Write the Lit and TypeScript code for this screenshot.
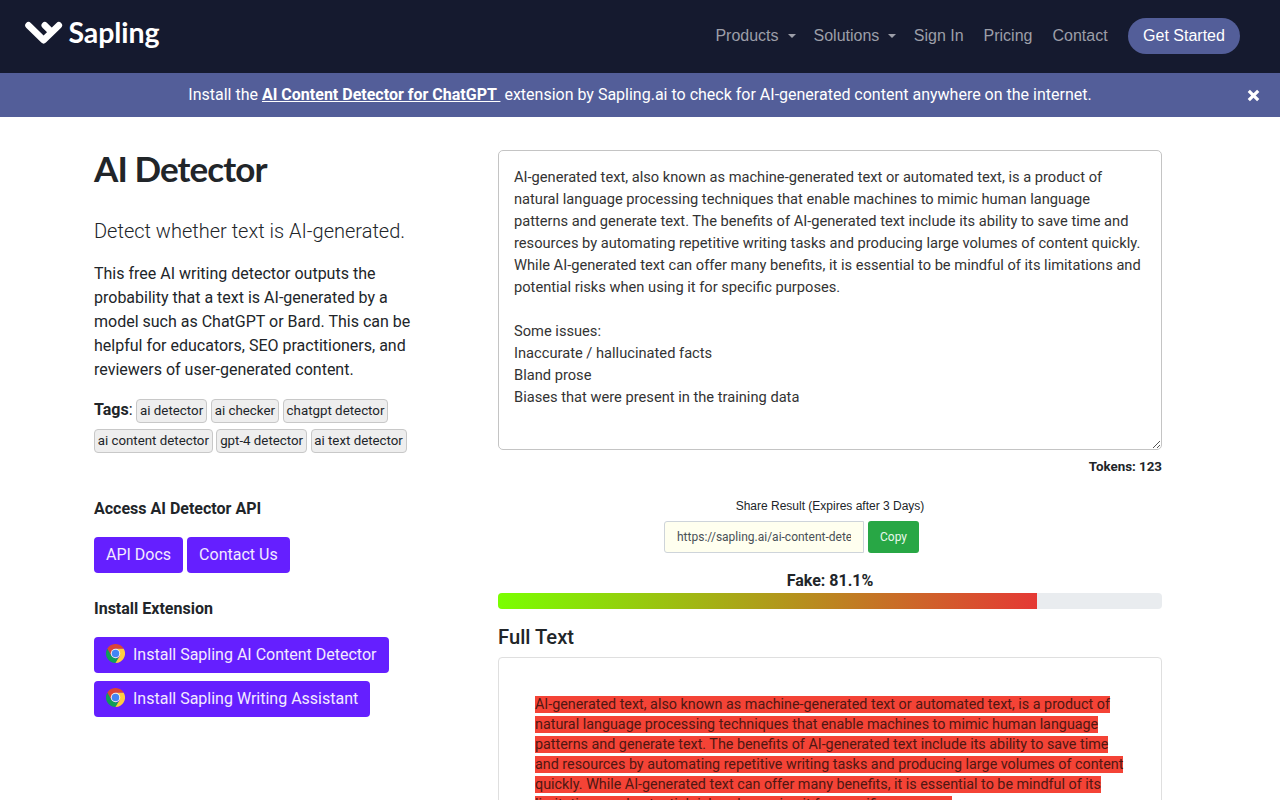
import { LitElement, html, css, svg } from "lit";
import { customElement } from "lit/decorators.js";

const INPUT_LINES = [
  "AI-generated text, also known as machine-generated text or automated text, is a product of",
  "natural language processing techniques that enable machines to mimic human language",
  "patterns and generate text. The benefits of AI-generated text include its ability to save time and",
  "resources by automating repetitive writing tasks and producing large volumes of content quickly.",
  "While AI-generated text can offer many benefits, it is essential to be mindful of its limitations and",
  "potential risks when using it for specific purposes.",
  "",
  "Some issues:",
  "Inaccurate / hallucinated facts",
  "Bland prose",
  "Biases that were present in the training data",
];

const RESULT_LINES = [
  "AI-generated text, also known as machine-generated text or automated text, is a product of",
  "natural language processing techniques that enable machines to mimic human language",
  "patterns and generate text. The benefits of AI-generated text include its ability to save time",
  "and resources by automating repetitive writing tasks and producing large volumes of content",
  "quickly. While AI-generated text can offer many benefits, it is essential to be mindful of its",
  "limitations and potential risks when using it for specific purposes.",
];

const TAG_ROWS = [
  ["ai detector", "ai checker", "chatgpt detector"],
  ["ai content detector", "gpt-4 detector", "ai text detector"],
];

const SCORE = 81.1;

const chromeIcon = svg`<svg class="chrome" viewBox="0 0 48 48" width="19" height="19">
  <path fill="#db4437" d="M3.2 12A24 24 0 0 1 44.8 12H24L13.6 30Z"/>
  <path fill="#0f9d58" d="M3.2 12L13.6 30L24 36H34.4L24 48A24 24 0 0 1 3.2 12Z"/>
  <path fill="#ffcd40" d="M24 12H44.8A24 24 0 0 1 24 48L34.4 30Z"/>
  <circle cx="24" cy="24" r="12" fill="#f1f1f1"/>
  <circle cx="24" cy="24" r="9.4" fill="#4285f4"/>
</svg>`;

@customElement("app-root")
export class AppRoot extends LitElement {
  static styles = css`
    :host { display: block; height: 800px; overflow: hidden; background: #fff; color: #212529;
      font-family: Roboto, sans-serif; font-size: 16px; line-height: 24px; }
    * { box-sizing: border-box; }
    p, h1, h2 { margin: 0; }
    .nav { height: 73px; background: #151a2f; display: flex; justify-content: space-between;
      align-items: flex-start; padding: 18px 40px 0 25px; }
    .brand { display: flex; color: #fff; }
    .mark { margin-top: 3px; }
    .word { font: 700 28.5px/28px Lato, sans-serif; margin-left: 5.5px; letter-spacing: -0.1px; }
    .links { display: flex; align-items: center; height: 36px; font-family: "Liberation Sans", Arial, sans-serif;
      color: #9c9ea8; white-space: nowrap; }
    .link { margin-right: 20px; }
    .link.end { margin-right: 20.4px; }
    .drop { margin-right: 18px; display: flex; align-items: center; }
    .drop.last { margin-right: 17.4px; }
    .drop::after { content: ""; margin-left: 9px; border: 4px solid transparent; border-top-color: currentColor;
      border-bottom: 0; }
    .cta { background: #535e99; color: #fff; width: 112px; height: 36px; line-height: 35px; border-radius: 18px;
      text-align: center; }
    .banner { height: 44px; background: #535e99; color: #fff; display: grid; grid-template-columns: 1fr auto 1fr;
      align-items: center; padding: 0 20px 0 20px; white-space: pre; }
    .banner b { text-decoration: underline; font-weight: 700; }
    .close { grid-column: 3; justify-self: end; }
    .message { grid-column: 2; }
    .page { display: grid; grid-template-columns: 332px 664px; column-gap: 72px; padding: 33px 0 0 94px; }
    .title { font: 700 35px/36px Lato, sans-serif; letter-spacing: -0.9px; }
    .lead { font-size: 20px; line-height: 30px; font-weight: 300; margin-top: 30px; }
    .desc { margin-top: 16px; white-space: nowrap; }
    .tags { display: flex; flex-direction: column; gap: 6px; margin-top: 17px; }
    .row { display: flex; gap: 4px; height: 24px; align-items: center; white-space: nowrap; }
    .row:first-child { gap: 3.5px; }
    .label { margin-top: -3px; }
    .tag { height: 24px; border: 1px solid #c8c8c8; border-radius: 4px; background: #eee; padding: 0 3px;
      font-size: 13.33px; line-height: 22px; }
    .row:last-child .tag { font-size: 13.3px; padding: 0 2.7px; }
    .row:last-child { gap: 3.8px; }
    .sub { font-size: 16px; font-weight: 700; margin-top: 44px; }
    .sub.next { margin-top: 24px; }
    .buttons { display: flex; gap: 4px; margin-top: 16px; }
    .stack { flex-direction: column; align-items: flex-start; gap: 8px; }
    .btn { height: 36px; border-radius: 4px; background: #651fff; color: #f3eaff; padding: 5px 12px 7px;
      line-height: 24px; display: flex; align-items: flex-start; white-space: nowrap; }
    .buttons .btn { padding-top: 6px; padding-bottom: 6px; line-height: 23px; }
    .stack .btn { padding-right: 12.2px; }
    .chrome { margin: 1px 8px 0 0; }
    .field { position: relative; height: 300px; border: 1px solid #c4c4c4; border-radius: 5px; padding: 15px;
      color: #333; font-size: 14.66px; line-height: 22px; white-space: pre; }
    .line { height: 22px; }
    .grip { position: absolute; right: 0; bottom: 0; }
    .tokens { text-align: right; font-size: 13.33px; font-weight: 700; line-height: 20px; margin-top: 7px; }
    .share { font: 12px/16px "Liberation Sans", Arial, sans-serif; text-align: center; margin-top: 21px; }
    .copyrow { display: flex; gap: 4px; margin: 7px 0 0 166px; font-size: 12px; line-height: 30px; }
    .url { width: 200px; height: 32px; border: 1px solid #ced4da; border-radius: 3px 0 0 3px; background: #ffffef;
      padding: 0 12px; color: #495057; }
    .clip { overflow: hidden; white-space: nowrap; }
    .copy { width: 51px; height: 32px; line-height: 32px; text-align: center; background: #28a745; color: #e8f8eb;
      border-radius: 3px; }
    .score { font-weight: 700; text-align: center; margin-top: 16px; }
    .bar { height: 16px; border-radius: 4px; overflow: hidden; background: #e9ecef; }
    .fill { height: 16px; background: linear-gradient(90deg, #7aff00, #e53935); }
    .heading { font-size: 20.2px; line-height: 24px; font-weight: 500; margin-top: 16px; }
    .card { height: 200px; margin-top: 8px; border: 1px solid #dfdfdf; border-radius: 4px; padding: 37px 36px;
      font-size: 14.345px; line-height: 20px; white-space: nowrap; color: #212529; }
    .hit { background: #f44336; color: #4f1712; }
  `;

  render() {
    return html`
      <nav class="nav">
        <div class="brand">
          <svg class="mark" width="38" height="24" viewBox="0 0 38 24" fill="none" stroke="#fff" stroke-width="6.6"
            stroke-linecap="round" stroke-linejoin="round">
            <path d="M3.5 4.3L18.6 19.2L33.8 4.3M19.8 4.3L26.4 10.8"/>
          </svg>
          <span class="word">Sapling</span>
        </div>
        <div class="links">
          <span class="drop">Products</span><span class="drop last">Solutions</span>
          <span class="link">Sign In</span><span class="link">Pricing</span><span class="link end">Contact</span>
          <span class="cta">Get Started</span>
        </div>
      </nav>
      <div class="banner">
        <span class="message">Install the <b>AI Content Detector for ChatGPT </b> extension by Sapling.ai to check for AI-generated content anywhere on the internet.</span>
        <svg class="close" width="13" height="13" viewBox="0 0 13 13" stroke="#fff" stroke-width="3.2"><path d="M1.8 1.8L11.2 11.2M11.2 1.8L1.8 11.2"/></svg>
      </div>
      <main class="page">
        <section>
          <h1 class="title">AI Detector</h1>
          <p class="lead">Detect whether text is AI-generated.</p>
          <p class="desc">This free AI writing detector outputs the<br>probability that a text is AI-generated by a<br>model such as ChatGPT or Bard. This can be<br>helpful for educators, SEO practitioners, and<br>reviewers of user-generated content.</p>
          <div class="tags">
            ${TAG_ROWS.map((row, i) => html`<div class="row">
              ${i === 0 ? html`<span class="label"><b>Tags</b>:</span>` : ""}
              ${row.map((t) => html`<span class="tag">${t}</span>`)}
            </div>`)}
          </div>
          <h2 class="sub">Access AI Detector API</h2>
          <div class="buttons"><span class="btn">API Docs</span><span class="btn">Contact Us</span></div>
          <h2 class="sub next">Install Extension</h2>
          <div class="buttons stack">
            <span class="btn">${chromeIcon}Install Sapling AI Content Detector</span>
            <span class="btn">${chromeIcon}Install Sapling Writing Assistant</span>
          </div>
        </section>
        <section>
          <div class="field">${INPUT_LINES.map((l) => html`<div class="line">${l}</div>`)}<svg class="grip" width="9" height="9" viewBox="0 0 9 9" stroke="#555" stroke-width="1"><path d="M1 8L8 1M5 8L8 5"/></svg></div>
          <p class="tokens">Tokens: 123</p>
          <p class="share">Share Result (Expires after 3 Days)</p>
          <div class="copyrow">
            <div class="url"><div class="clip">https://sapling.ai/ai-content-detector</div></div>
            <div class="copy">Copy</div>
          </div>
          <p class="score">Fake: ${SCORE}%</p>
          <div class="bar"><div class="fill" style="width:${SCORE}%"></div></div>
          <h2 class="heading">Full Text</h2>
          <div class="card">${RESULT_LINES.map((l) => html`<div><span class="hit">${l}</span></div>`)}</div>
        </section>
      </main>`;
  }
}
